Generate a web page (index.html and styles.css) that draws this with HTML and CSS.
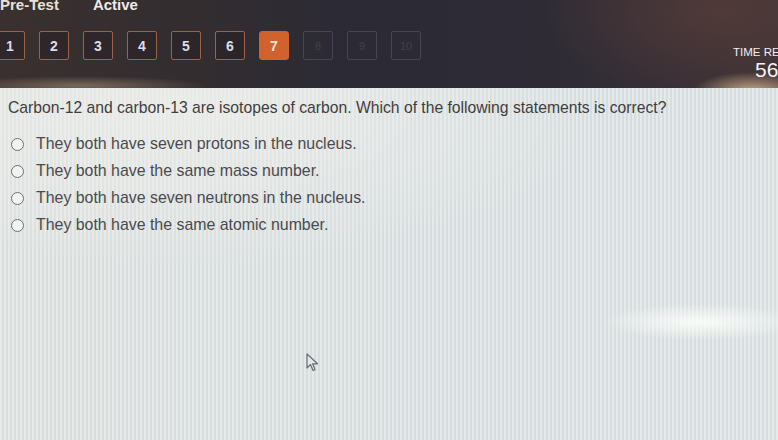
FILE: index.html
```html
<!DOCTYPE html>
<html>
<head>
<meta charset="utf-8">
<link rel="stylesheet" href="styles.css">
</head>
<body>
<div class="screen">
  <header class="header">
    <div class="titlebar">
      <span class="title">Pre-Test</span>
      <span class="status">Active</span>
    </div>
    <div class="navrow">
      <nav class="qnav">
        <span class="qbtn">1</span>
        <span class="qbtn">2</span>
        <span class="qbtn">3</span>
        <span class="qbtn">4</span>
        <span class="qbtn">5</span>
        <span class="qbtn">6</span>
        <span class="qbtn current">7</span>
        <span class="qbtn locked">8</span>
        <span class="qbtn locked">9</span>
        <span class="qbtn locked">10</span>
      </nav>
      <div class="timer">
        <div class="timer-label">TIME REMAINING</div>
        <div class="timer-value">56</div>
      </div>
    </div>
  </header>
  <main class="content">
    <p class="question">Carbon-12 and carbon-13 are isotopes of carbon. Which of the following statements is correct?</p>
    <ul class="options">
      <li class="option"><span class="radio"></span><span>They both have seven protons in the nucleus.</span></li>
      <li class="option"><span class="radio"></span><span>They both have the same mass number.</span></li>
      <li class="option"><span class="radio"></span><span>They both have seven neutrons in the nucleus.</span></li>
      <li class="option"><span class="radio"></span><span>They both have the same atomic number.</span></li>
    </ul>
    <svg class="cursor" width="14" height="20" viewBox="0 0 14 20">
      <path d="M1 1 L1 15 L4.5 11.5 L7 17.5 L9 16.6 L6.6 10.8 L11.5 10.8 Z" fill="#e4e8e8" stroke="#6a6f74" stroke-width="1.2" stroke-linejoin="round"/>
    </svg>
  </main>
</div>
</body>
</html>
```
FILE: styles.css
```css
html, body {
  margin: 0;
  padding: 0;
  width: 778px;
  height: 440px;
  overflow: hidden;
}
body {
  font-family: "Liberation Sans", Arial, sans-serif;
  background: #dfe4e3;
}
.screen {
  width: 778px;
  height: 440px;
  display: flex;
  flex-direction: column;
  overflow: hidden;
}
.header {
  height: 88px;
  flex: none;
  background:
    radial-gradient(ellipse 60px 20px at 752px 92px, rgba(230,190,150,0.85), rgba(230,190,150,0) 100%),
    radial-gradient(ellipse 130px 10px at 80px 86px, rgba(200,175,140,0.45), rgba(200,175,140,0) 100%),
    radial-gradient(ellipse 180px 90px at 720px 10px, rgba(90,62,58,0.7), rgba(90,62,58,0) 100%),
    linear-gradient(90deg, #3a302f 0%, #332d30 25%, #2b2a35 45%, #2e2b35 70%, #3d3236 100%);
  display: flex;
  flex-direction: column;
  color: #f1f1f1;
}
.titlebar {
  display: flex;
  gap: 34px;
  height: 18px;
  margin-top: -4px;
  font-size: 15px;
  font-weight: bold;
  line-height: 18px;
}
.title { color: #e8e2da; }
.status { color: #ecebee; }
.navrow {
  display: flex;
  align-items: flex-start;
  margin-top: 16px;
}
.qnav {
  display: flex;
  gap: 14px;
  margin-left: -5px;
  margin-top: 1px;
}
.qbtn {
  width: 28px;
  height: 27px;
  border: 1px solid #9a6448;
  border-radius: 2px;
  box-sizing: content-box;
  display: flex;
  align-items: center;
  justify-content: center;
  font-size: 14px;
  font-weight: bold;
  color: #dcdde6;
  background: rgba(40,34,38,0.6);
}
.qbtn.current {
  background: #d0622e;
  border-color: #d0622e;
  color: #f6e4d8;
  border-radius: 3px;
}
.qbtn.locked {
  border-color: #4a4450;
  color: #45404c;
  font-size: 11px;
  font-weight: normal;
  background: transparent;
}
.timer {
  margin-left: auto;
  width: 45px;
  flex: none;
  white-space: nowrap;
  margin-top: 16px;
}
.timer-label {
  font-size: 11.5px;
  line-height: 13px;
  color: #eef0f4;
}
.timer-value {
  font-size: 21px;
  line-height: 22px;
  padding-left: 22px;
  color: #f3f3f3;
}
.content {
  position: relative;
  flex: 1;
  padding: 10px 0 0 8px;
  background:
    radial-gradient(ellipse 100px 18px at 700px 234px, rgba(255,255,250,0.85), rgba(255,255,250,0) 100%),
    radial-gradient(ellipse 420px 160px at 180px 20px, rgba(240,240,236,0.7), rgba(240,240,236,0) 100%),
    repeating-linear-gradient(90deg, rgba(255,255,255,0.2) 0px, rgba(255,255,255,0.2) 2px, rgba(150,160,165,0.1) 2px, rgba(150,160,165,0.1) 4px),
    linear-gradient(90deg, #e1e5e3 0%, #dde3e4 50%, #dfe5e6 100%);
}
.question {
  margin: 0;
  font-size: 15.7px;
  line-height: 20px;
  color: #3e3e40;
}
.options {
  list-style: none;
  margin: 17px 0 0 0;
  padding: 0 0 0 3px;
  display: flex;
  flex-direction: column;
  gap: 9px;
}
.option {
  display: flex;
  align-items: center;
  gap: 12px;
  font-size: 15.9px;
  line-height: 18px;
  color: #4a4a4e;
}
.radio {
  width: 11px;
  height: 11px;
  border: 1.5px solid #6d7176;
  border-radius: 50%;
  background: #f1f3f2;
  flex: none;
}
.cursor {
  position: absolute;
  left: 306px;
  top: 265px;
}
```
